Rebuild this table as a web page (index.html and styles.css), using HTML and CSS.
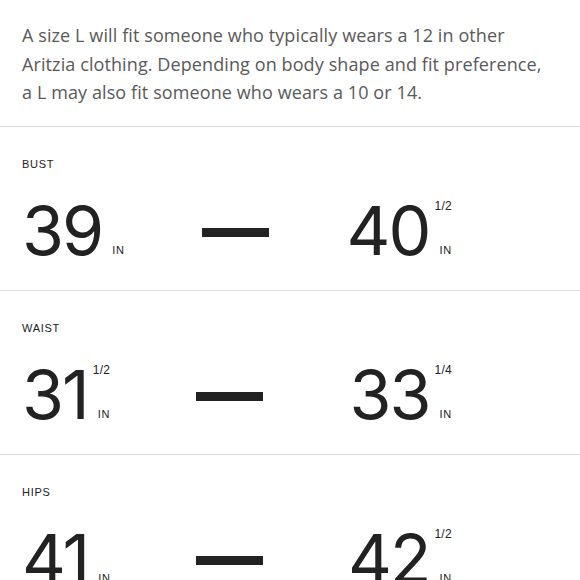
FILE: index.html
```html
<!DOCTYPE html>
<html lang="en">
<head>
<meta charset="utf-8">
<title>Size guide</title>
<link rel="stylesheet" href="styles.css">
</head>
<body>
<div class="fit">
  <p class="fit-note">A size L will fit someone who typically wears a 12 in other<br>Aritzia clothing. Depending on body shape and fit preference,<br>a L may also fit someone who wears a 10 or 14.</p>

  <section class="measure">
    <h3 class="measure-label">BUST</h3>
    <div class="measure-row">
      <div class="value"><span class="num">39</span><span class="unit"><span class="frac"></span><span class="in">IN</span></span></div>
      <span class="dash"></span>
      <div class="value"><span class="num">40</span><span class="unit"><span class="frac">1/2</span><span class="in">IN</span></span></div>
    </div>
  </section>

  <section class="measure">
    <h3 class="measure-label">WAIST</h3>
    <div class="measure-row">
      <div class="value"><span class="num">31</span><span class="unit"><span class="frac">1/2</span><span class="in">IN</span></span></div>
      <span class="dash"></span>
      <div class="value"><span class="num">33</span><span class="unit"><span class="frac">1/4</span><span class="in">IN</span></span></div>
    </div>
  </section>

  <section class="measure">
    <h3 class="measure-label">HIPS</h3>
    <div class="measure-row">
      <div class="value"><span class="num">41</span><span class="unit"><span class="frac"></span><span class="in">IN</span></span></div>
      <span class="dash"></span>
      <div class="value"><span class="num">42</span><span class="unit"><span class="frac">1/2</span><span class="in">IN</span></span></div>
    </div>
  </section>
</div>
</body>
</html>
```

FILE: styles.css
```css
html, body {
  margin: 0;
  padding: 0;
  background: #ffffff;
}

.fit {
  width: 580px;
}

.fit-note {
  margin: 0;
  padding: 21px 22px 19px 22px;
  font-family: "Open Sans", "Liberation Sans", sans-serif;
  font-size: 18px;
  line-height: 28.5px;
  letter-spacing: 0.1px;
  color: #595959;
}

.measure {
  border-top: 1px solid #dedede;
  padding: 29px 128px 25px 22px;
}

.measure-label {
  margin: 0;
  font-family: "Liberation Sans", Arial, sans-serif;
  font-size: 11px;
  line-height: 16px;
  font-weight: normal;
  letter-spacing: 0.7px;
  color: #222222;
}

.measure-row {
  margin-top: 24px;
  display: flex;
  justify-content: space-between;
  align-items: center;
  height: 69px;
}

.value {
  display: flex;
  align-items: stretch;
  gap: 4px;
}

.num {
  font-family: "Inter", "Liberation Sans", Arial, sans-serif;
  font-size: 68px;
  line-height: 69px;
  letter-spacing: -2px;
  color: #222222;
}

.unit {
  display: flex;
  flex-direction: column;
  justify-content: space-between;
  align-items: flex-end;
  padding: 4px 0 9px 0;
  font-family: "Liberation Sans", Arial, sans-serif;
  color: #222222;
}

.frac {
  font-size: 12px;
  line-height: 12px;
  letter-spacing: 0.3px;
}

.in {
  font-size: 11px;
  line-height: 11px;
  letter-spacing: 0.8px;
  padding-left: 6px;
}

.dash {
  width: 67px;
  height: 9px;
  background: #222222;
  margin-top: 4px;
}
```
